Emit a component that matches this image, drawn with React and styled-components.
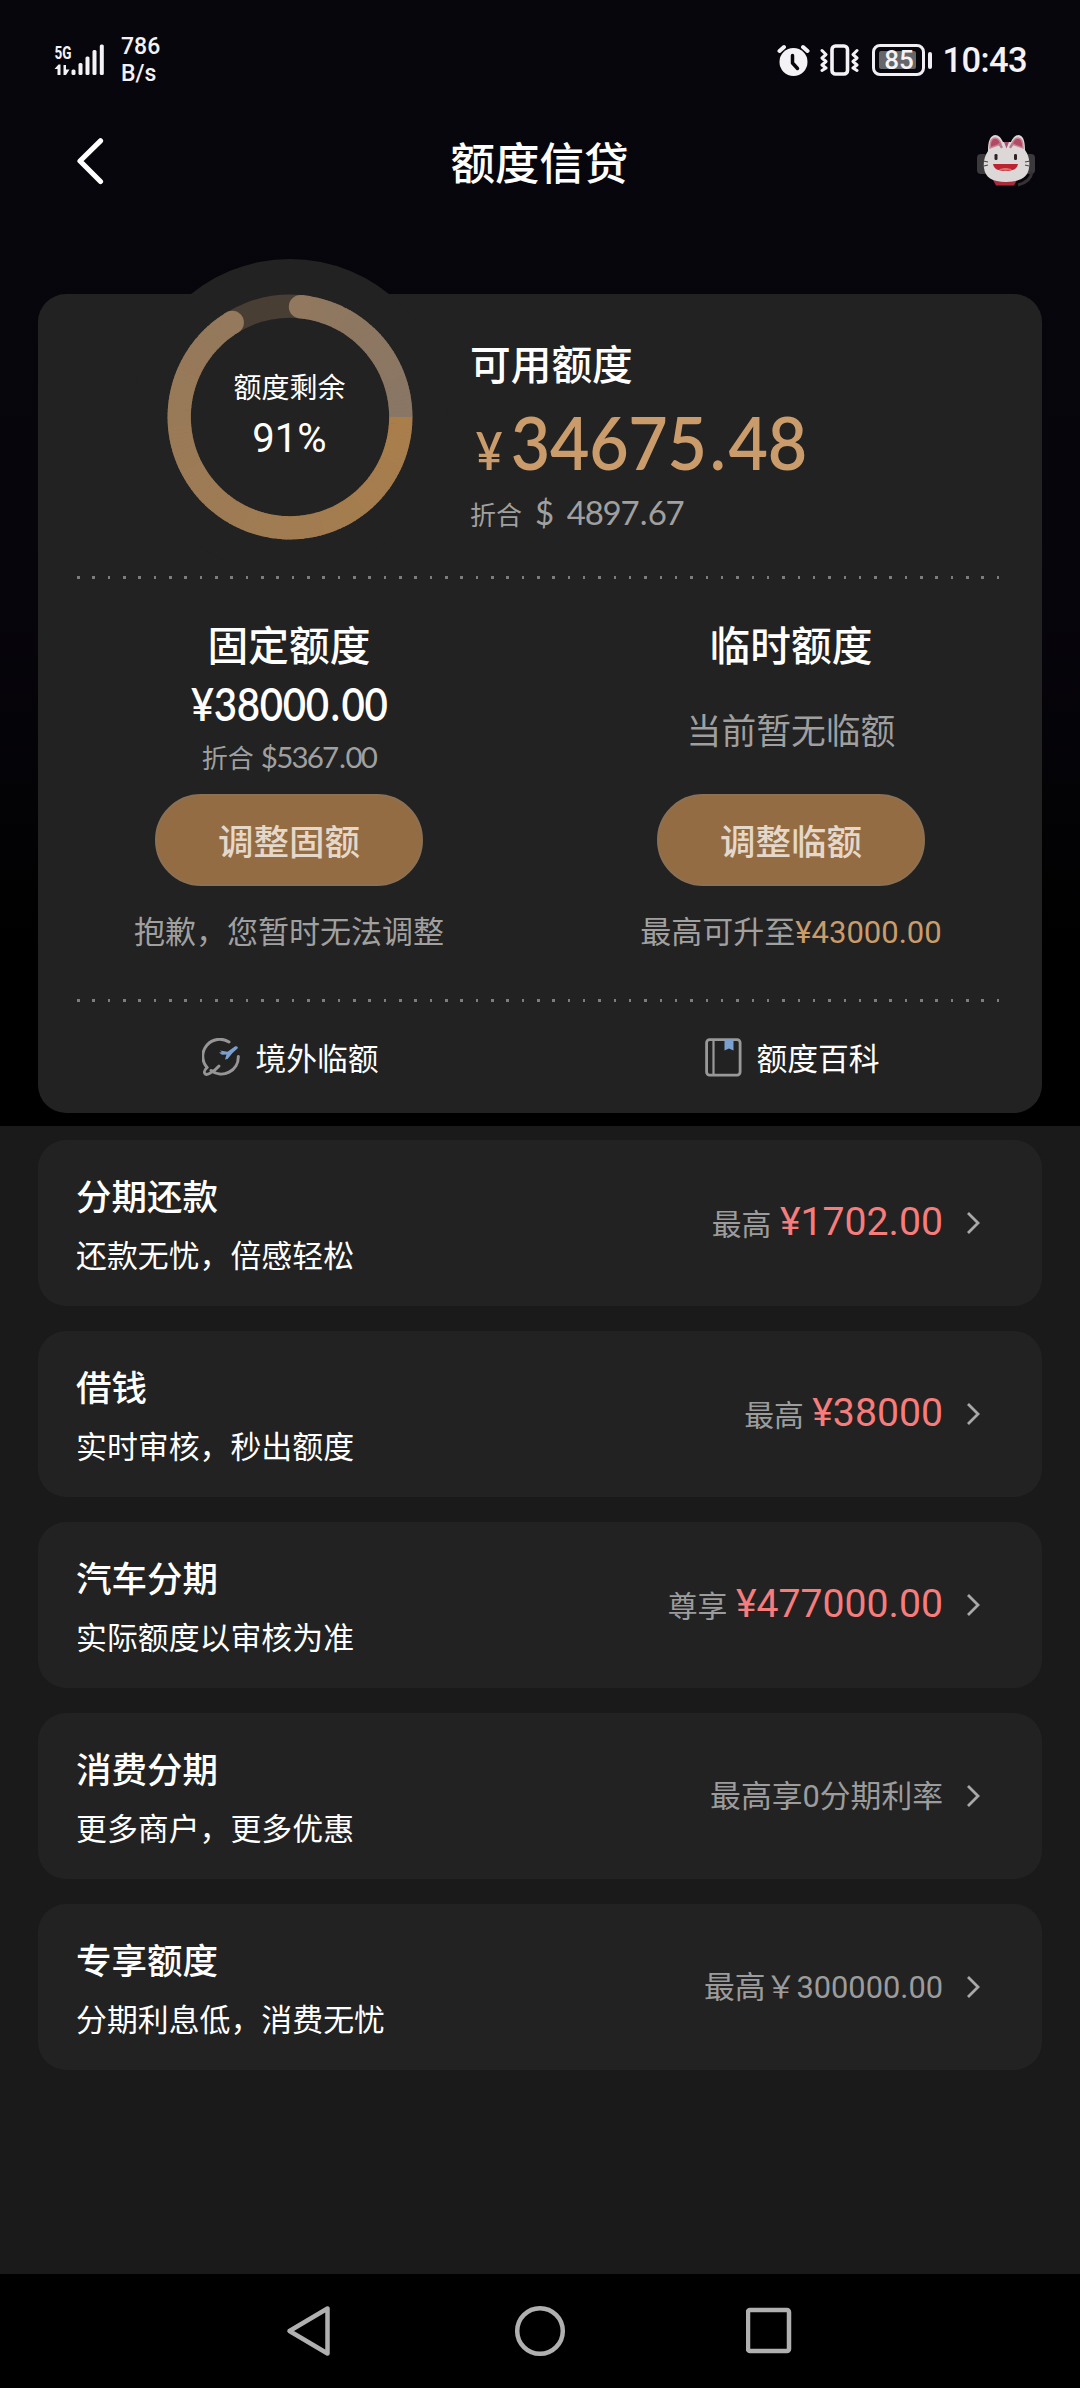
import React from 'react';
import styled, { createGlobalStyle } from 'styled-components';

const cjk = '"Noto Sans CJK SC", sans-serif';
const roboto = 'Roboto, "Noto Sans CJK SC", sans-serif';
const lato = 'Lato, "Noto Sans CJK SC", sans-serif';

const GlobalStyle = createGlobalStyle`
  * {
    box-sizing: border-box;
  }
  body {
    margin: 0;
    background: #1a1a1b;
    color: #fff;
    font-family: ${cjk};
  }
  svg {
    display: block;
    flex: none;
  }
`;

const Screen = styled.div`
  display: flex;
  flex-direction: column;
  width: 1080px;
  height: 2388px;
  overflow: hidden;
`;

const Hero = styled.section`
  height: 1126px;
  flex: none;
  background: linear-gradient(#08060d 0, #07050c 600px, #000 950px);
`;

const StatusBar = styled.div`
  display: flex;
  align-items: center;
  justify-content: space-between;
  height: 120px;
  padding: 0 53px 0 54px;
  font-family: ${roboto};
  font-weight: 500;
  color: #f4f2f5;
`;

const StatusGroup = styled.div`
  display: flex;
  align-items: center;
`;

const Speed = styled.div`
  margin-left: 16px;
  font-size: 23px;
  line-height: 27px;
`;

const Battery = styled.div`
  display: flex;
  align-items: center;
  margin-left: 13px;
`;

const BatteryBody = styled.div`
  width: 53px;
  height: 32px;
  padding: 4px 7px 4px 3.5px;
  border: 3px solid #f0eef2;
  border-radius: 8px;
`;

const BatteryFill = styled.div`
  display: flex;
  align-items: center;
  justify-content: center;
  width: 37px;
  height: 18px;
  border-radius: 2px;
  background: #66656a;
  font-size: 26px;
  line-height: 18px;
  padding-left: 3px;
`;

const BatteryTip = styled.div`
  width: 4px;
  height: 17px;
  margin-left: 3px;
  border-radius: 2px;
  background: #f0eef2;
`;

const Clock = styled.div`
  margin-left: 10px;
  font-size: 34.5px;
  line-height: 40px;
  letter-spacing: -0.6px;
`;

const Header = styled.header`
  display: grid;
  grid-template-columns: 1fr auto 1fr;
  align-items: center;
  height: 84px;
  padding: 0 45px 0 76px;
`;

const HeaderTitle = styled.h1`
  margin: 0;
  padding: 0 32px 3px 0;
  font-size: 44.5px;
  font-weight: 500;
  line-height: 60px;
`;

const HeaderEnd = styled.div`
  justify-self: end;
  padding-bottom: 2px;
`;

const SummaryCard = styled.div`
  height: 819px;
  margin: 90px 38px 0;
  border-radius: 28px;
  background: #222;
`;

const Overview = styled.div`
  display: flex;
  height: 282px;
  padding-left: 93.5px;
`;

const Gauge = styled.div`
  display: grid;
  place-items: center;
  width: 316px;
  height: 316px;
  margin-top: -35.5px;
  border-radius: 50%;
  background: #222;

  > * {
    grid-area: 1 / 1;
  }
`;

const GaugeText = styled.div`
  padding-bottom: 7px;
  text-align: center;
  font-size: 28px;
  line-height: 40px;
`;

const GaugeValue = styled.div`
  margin-top: 11px;
  font-family: ${roboto};
  font-size: 40px;
  line-height: 44px;
`;

const Available = styled.div`
  margin-left: 22.5px;
  padding-top: 44px;
`;

const BlockTitle = styled.div`
  font-size: 40.7px;
  font-weight: 500;
  line-height: 50px;
`;

/* Lato digits are wider than this design wants, so the big figures are condensed */
const AvailableAmount = styled.div`
  margin-top: 19px;
  padding-left: 6px;
  font-family: ${lato};
  font-size: 74px;
  font-weight: 600;
  line-height: 70px;
  letter-spacing: -0.3px;
  white-space: nowrap;
  color: #cb9c6b;
  transform: scaleX(0.92);
  transform-origin: left;
`;

const Currency = styled.span`
  margin-right: 9px;
  font-size: 51px;
  line-height: 0;
`;

const Point = styled.span`
  margin: 0 ${p => p.$gap}px;
`;

const Converted = styled.div`
  margin-top: ${p => (p.$large ? 15 : 10)}px;
  font-family: ${lato};
  font-size: ${p => (p.$large ? 33 : 29.5)}px;
  line-height: ${p => (p.$large ? 40 : 36)}px;
  letter-spacing: ${p => (p.$large ? -1.3 : -1.8)}px;
  color: #a0a0a0;
`;

const ConvertedLabel = styled.span`
  margin-right: ${p => p.$gap}px;
  font-size: 26px;
  line-height: 0;
  letter-spacing: 0;
`;

const ConvertedSign = styled.span`
  margin-right: ${p => p.$gap || 0}px;
`;

const DottedLine = styled.div`
  height: 3px;
  margin: 0 38px 0 39px;
  background: repeating-linear-gradient(90deg, #7d7d7d 0, #7d7d7d 2.6px, transparent 2.6px, transparent 15.33px);
`;

const Columns = styled.div`
  display: grid;
  grid-template-columns: 1fr 1fr;
`;

const Column = styled.div`
  display: flex;
  flex-direction: column;
  align-items: center;
  height: 419.5px;
  padding-top: 40px;
`;

const ColumnBody = styled.div`
  display: flex;
  flex-direction: column;
  align-items: center;
  height: 125px;
`;

const FixedAmount = styled.div`
  margin-top: 10px;
  font-family: ${lato};
  font-size: 45.5px;
  font-weight: 600;
  line-height: 50px;
  letter-spacing: -0.4px;
  transform: scaleX(0.885);
`;

const EmptyHint = styled.div`
  margin-top: 34.5px;
  font-size: 34.8px;
  line-height: 50px;
  color: #9f9f9f;
`;

const AdjustButton = styled.button`
  flex: none;
  width: 268px;
  height: 92px;
  padding: 0;
  border: 2px solid #8c7052;
  border-radius: 46px;
  background: #946c43;
  color: #e5d8ca;
  font-family: ${cjk};
  font-size: 35.5px;
  font-weight: 500;
  line-height: 50px;
`;

const Note = styled.div`
  margin-top: 24px;
  font-size: 31px;
  line-height: 40px;
  color: #a0a0a0;
`;

const NoteAmount = styled.span`
  font-family: ${roboto};
  color: #cb9c6b;
`;

const LinkItem = styled.div`
  display: flex;
  align-items: center;
  justify-content: center;
  gap: 14px;
  height: 111.5px;
  padding-left: 3px;
  font-size: 30.8px;
  line-height: 40px;
`;

const Products = styled.main`
  display: flex;
  flex-direction: column;
  gap: 25px;
  flex: 1;
  padding: 14px 38px 0;
`;

const ProductCard = styled.div`
  display: flex;
  align-items: center;
  height: 166px;
  padding: 0 61px 0 38px;
  border-radius: 28px;
  background: #222;
`;

const ProductText = styled.div`
  flex: 1;
`;

const ProductTitle = styled.div`
  font-size: 35.5px;
  font-weight: 500;
  line-height: 44px;
`;

const ProductHint = styled.div`
  margin-top: 17px;
  font-size: 30.9px;
  line-height: 40px;
`;

const ProductValue = styled.div`
  margin-right: 23px;
  padding-bottom: 1px;
  font-size: ${p => (p.$plain ? 30.8 : 29.8)}px;
  line-height: 40px;
  color: #9c9c9c;
`;

const Latin = styled.span`
  font-family: ${roboto};
`;

const ProductAmount = styled.span`
  margin-left: 8.5px;
  font-family: ${roboto};
  font-size: 39.2px;
  line-height: 1;
  color: #f77c7c;
`;

const NavBar = styled.nav`
  display: flex;
  align-items: center;
  justify-content: space-between;
  flex: none;
  height: 114px;
  padding: 0 284px;
  background: #000;
`;

function SignalIcon() {
  return (
    <svg width="51" height="50" viewBox="53.500 34 51 50" fill="#f4f2f5">
      <text x="54" y="57.500" fontFamily="Roboto" fontSize="19" fontWeight="700" textLength="17" lengthAdjust="spacingAndGlyphs">5G</text>
      <path d="M54 68l4-4.500h2V74h-3v-6zM63 64h2.500v4.500H69L65.500 74H63z" />
      <rect x="71" y="68.500" width="4" height="5.500" rx="1.500" />
      <rect x="78" y="62" width="4" height="12" rx="1.500" />
      <rect x="85" y="55.500" width="4" height="18.500" rx="1.500" />
      <rect x="92" y="49" width="4" height="25" rx="1.500" />
      <rect x="99.300" y="43.500" width="4" height="30.500" rx="1.500" />
    </svg>
  );
}

function AlarmIcon() {
  return (
    <svg width="33" height="32" viewBox="0 0 33 32">
      <circle cx="16.500" cy="18" r="14" fill="#f4f2f5" />
      <path d="M2.500 7L7 3M30.500 7L26 3" stroke="#f4f2f5" strokeWidth="4" strokeLinecap="round" />
      <path d="M15.500 11.500v7.500l5 5.500" fill="none" stroke="#08060d" strokeWidth="3.500" strokeLinecap="round" strokeLinejoin="round" />
    </svg>
  );
}

function VibrateIcon() {
  return (
    <svg width="39" height="34" viewBox="0 0 39 34" fill="none" stroke="#f4f2f5" strokeWidth="3" strokeLinecap="round" strokeLinejoin="round">
      <rect x="12" y="3" width="15.500" height="28" rx="3.500" strokeWidth="3.600" />
      <path d="M2 7.500l4 4-4 3.500 4 3.500-4 3.500 4 3-4 2.500" />
      <path d="M37 7.500l-4 4 4 3.500-4 3.500 4 3.500-4 3 4 2.500" />
    </svg>
  );
}

function MascotIcon() {
  return (
    <svg width="58" height="54" viewBox="0 0 58 54">
      <rect x="0" y="20" width="11" height="20" rx="4" fill="#3b393c" />
      <rect x="47" y="20" width="11" height="20" rx="4" fill="#3b393c" />
      <path d="M55 38c-1 7-6 11-14 13" fill="none" stroke="#343235" strokeWidth="3" />
      <path d="M16 46h24l-3 5.500H19z" fill="#a92a3c" />
      <path d="M11 17C11 7 13 2 18 1c4 0 6 3 8 7h8c2-4 4-7 8-7 5 1 6 8 6 15 4 6 5 11 4 18-1 9-9 14-23 14S8 43 7 34c-1-7 1-12 4-17z" fill="#ddd8d8" />
      <path d="M13 14c0-6 2-10 5-10s5 3 6 6z" fill="#b14a64" stroke="#ca8494" strokeWidth="1.500" />
      <path d="M46 14c0-6-2-10-5-10s-5 3-6 6z" fill="#b14a64" stroke="#ca8494" strokeWidth="1.500" />
      <path d="M22.500 10l2 3M35.500 10l-2 3" stroke="#b5798e" strokeWidth="2.500" strokeLinecap="round" />
      <path d="M27 8h5l-2.500 6.500z" fill="#a8506d" />
      <rect x="17.500" y="20" width="3" height="6" rx="1.200" fill="#2e2428" />
      <rect x="37" y="20" width="3" height="6" rx="1.200" fill="#2e2428" />
      <path d="M6 27l5 1M7 32l4-1M53 27l-5 1M52 32l-4-1" stroke="#4c4246" strokeWidth="1.200" />
      <path d="M16 30h25c-1 5-5 7-12.500 7S17 35 16 30z" fill="#bd2230" />
      <path d="M22 35.500c4-2 9-2 13 0-3 1.500-10 1.500-13 0z" fill="#d9706c" />
    </svg>
  );
}

const START = 5.4;
const END = 328.6;
const STEP = 2;
const RADIUS = 110.8;

const point = deg => {
  const rad = ((deg - 90) * Math.PI) / 180;
  return [158 + RADIUS * Math.cos(rad), 158 + RADIUS * Math.sin(rad)];
};

// colour sweep that begins at three o'clock and runs clockwise
const sweep = deg => {
  const t = ((deg + 270) % 360) / 360;
  const from = [169, 126, 75];
  const to = [137, 118, 101];
  const mix = from.map((c, i) => Math.round(c + (to[i] - c) * t));
  return `rgb(${mix.join(',')})`;
};

function GaugeRing() {
  const parts = [];
  for (let a = START; a < END; a += STEP) {
    const edge = a < 90 && a + STEP + 0.4 > 90;
    const b = Math.min(edge ? 90 : a + STEP + 0.4, END);
    const [x1, y1] = point(a < 90 || a - STEP >= 90 ? a : 90);
    const [x2, y2] = point(b);
    parts.push(<path key={a} d={`M${x1} ${y1}A${RADIUS} ${RADIUS} 0 0 1 ${x2} ${y2}`} stroke={sweep(a)} />);
  }
  const [sx, sy] = point(START);
  const [ex, ey] = point(END);
  return (
    <svg width="316" height="316" viewBox="0 0 316 316" fill="none" strokeWidth="23.300">
      <circle cx="158" cy="158" r={RADIUS} stroke="#493e34" />
      {parts}
      <circle cx={sx} cy={sy} r="11.650" fill={sweep(START)} />
      <circle cx={ex} cy={ey} r="11.650" fill={sweep(END)} />
    </svg>
  );
}

function TravelIcon() {
  return (
    <svg width="39" height="39" viewBox="0 0 39 39" fill="none" strokeLinecap="round">
      <path d="M27 4A17 17 0 0 0 5 29.500M36.300 18.500A17 17 0 0 1 9 32.500" stroke="#969696" strokeWidth="3" />
      <path d="M5 29.500c-5 5-2 8.500 2.500 6 4-2 7-4.500 9.500-7.500" stroke="#969696" strokeWidth="2.800" />
      <path d="M18 12.500l7.500 1.300 7-5c2-1.200 4.300 0 3 1.800L30.500 15l-5 6-2.500.5 1.500-5-4.500.3-3-2.300 3-.2z" fill="#7b9fce" />
    </svg>
  );
}

function BookIcon() {
  return (
    <svg width="37" height="39" viewBox="0 0 37 39" fill="none" stroke="#999" strokeWidth="2.800">
      <rect x="1.600" y="1.600" width="33.500" height="35.500" rx="3" />
      <path d="M8.500 2v35" strokeWidth="2.200" />
      <path d="M19.500 1.500h9V12.500L24 10.500l-4.500 2z" fill="#7b9fce" stroke="none" />
    </svg>
  );
}

const products = [
  { title: '分期还款', hint: '还款无忧，倍感轻松', label: '最高', amount: '¥1702.00' },
  { title: '借钱', hint: '实时审核，秒出额度', label: '最高', amount: '¥38000' },
  { title: '汽车分期', hint: '实际额度以审核为准', label: '尊享', amount: '¥477000.00' },
  { title: '消费分期', hint: '更多商户，更多优惠', plain: <>最高享<Latin>0</Latin>分期利率</> },
  { title: '专享额度', hint: '分期利息低，消费无忧', plain: <>最高￥<Latin>300000.00</Latin></> },
];

function Product({ title, hint, label, amount, plain }) {
  return (
    <ProductCard>
      <ProductText>
        <ProductTitle>{title}</ProductTitle>
        <ProductHint>{hint}</ProductHint>
      </ProductText>
      <ProductValue $plain={!!plain}>
        {plain || <>{label}<ProductAmount>{amount}</ProductAmount></>}
      </ProductValue>
      <svg width="15" height="24" viewBox="0 0 15 24" fill="none" stroke="#a9a9a9" strokeWidth="2.800">
        <path d="M2 2l10 10L2 22" />
      </svg>
    </ProductCard>
  );
}

export default function App() {
  return (
    <Screen lang="zh-CN">
      <GlobalStyle />
      <Hero>
        <StatusBar>
          <StatusGroup>
            <SignalIcon />
            <Speed>786<br />B/s</Speed>
          </StatusGroup>
          <StatusGroup>
            <AlarmIcon />
            <svg width="10" height="1" />
            <VibrateIcon />
            <Battery>
              <BatteryBody><BatteryFill>85</BatteryFill></BatteryBody>
              <BatteryTip />
            </Battery>
            <Clock>10:43</Clock>
          </StatusGroup>
        </StatusBar>
        <Header>
          <svg width="30" height="48" viewBox="0 0 30 48" fill="none" stroke="#fff" strokeWidth="5.200" strokeLinecap="round" strokeLinejoin="round">
            <path d="M24.500 2.800L4 23l20.500 20.500" />
          </svg>
          <HeaderTitle>额度信贷</HeaderTitle>
          <HeaderEnd><MascotIcon /></HeaderEnd>
        </Header>
        <SummaryCard>
          <Overview>
            <Gauge>
              <GaugeRing />
              <GaugeText>
                额度剩余
                <GaugeValue>91%</GaugeValue>
              </GaugeText>
            </Gauge>
            <Available>
              <BlockTitle>可用额度</BlockTitle>
              <AvailableAmount>
                <Currency>¥</Currency>34675<Point $gap={3.2}>.</Point>48
              </AvailableAmount>
              <Converted $large>
                <ConvertedLabel $gap={13}>折合</ConvertedLabel>
                <ConvertedSign $gap={14}>$</ConvertedSign>4897<Point $gap={1.5}>.</Point>67
              </Converted>
            </Available>
          </Overview>
          <DottedLine />
          <Columns>
            <Column>
              <BlockTitle>固定额度</BlockTitle>
              <ColumnBody>
                <FixedAmount>¥38000<Point $gap={2}>.</Point>00</FixedAmount>
                <Converted>
                  <ConvertedLabel $gap={7}>折合</ConvertedLabel>
                  <ConvertedSign>$</ConvertedSign>5367<Point $gap={1.5}>.</Point>00
                </Converted>
              </ColumnBody>
              <AdjustButton>调整固额</AdjustButton>
              <Note>抱歉，您暂时无法调整</Note>
            </Column>
            <Column>
              <BlockTitle>临时额度</BlockTitle>
              <ColumnBody>
                <EmptyHint>当前暂无临额</EmptyHint>
              </ColumnBody>
              <AdjustButton>调整临额</AdjustButton>
              <Note>最高可升至<NoteAmount>¥43000.00</NoteAmount></Note>
            </Column>
          </Columns>
          <DottedLine />
          <Columns>
            <LinkItem><TravelIcon />境外临额</LinkItem>
            <LinkItem><BookIcon />额度百科</LinkItem>
          </Columns>
        </SummaryCard>
      </Hero>
      <Products>
        {products.map(item => <Product key={item.title} {...item} />)}
      </Products>
      <NavBar>
        <svg width="50" height="54" viewBox="0 0 50 54" fill="none" stroke="#b0b0b0" strokeWidth="4.500" strokeLinejoin="round">
          <path d="M5.500 27L43.500 4.500v45z" />
        </svg>
        <svg width="54" height="54" viewBox="0 0 54 54" fill="none" stroke="#b0b0b0" strokeWidth="4.500">
          <circle cx="27" cy="27" r="22.800" />
        </svg>
        <svg width="50" height="54" viewBox="0 0 50 54" fill="none" stroke="#b0b0b0" strokeWidth="4.500">
          <rect x="2" y="6" width="41" height="41" rx="2" />
        </svg>
      </NavBar>
    </Screen>
  );
}
